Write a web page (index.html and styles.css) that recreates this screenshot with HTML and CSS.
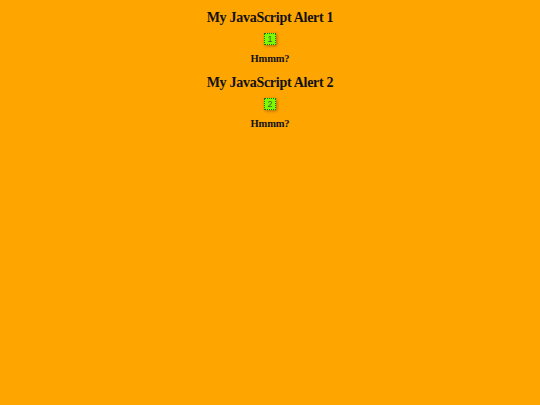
FILE: index.html
```html
<!DOCTYPE html>
<html>
<head>
<meta charset="utf-8">
<title>Alerts</title>
<link rel="stylesheet" href="styles.css">
</head>
<body>
<div class="alert">
  <h2 class="title">My JavaScript Alert 1</h2>
  <button class="btn">1</button>
  <p class="msg">Hmmm?</p>
</div>
<div class="alert">
  <h2 class="title">My JavaScript Alert 2</h2>
  <button class="btn">2</button>
  <p class="msg">Hmmm?</p>
</div>
</body>
</html>
```
FILE: styles.css
```css
html, body {
  margin: 0;
  padding: 0;
  background: #ffa500;
  height: 100%;
}
body {
  font-family: "Liberation Serif", "Times New Roman", serif;
  color: #000;
  padding-top: 10px;
  box-sizing: border-box;
}
.alert {
  display: flex;
  flex-direction: column;
  align-items: center;
  height: 65px;
}
.title {
  margin: 0;
  font-size: 14px;
  letter-spacing: -0.28px;
  font-weight: bold;
  line-height: 16px;
  color: #111;
}
.btn {
  margin-top: 7px;
  width: 12px;
  height: 12px;
  padding: 0;
  background: #7cfc00;
  border: 1px dotted #2a6a00;
  box-shadow: 1px 1px 3px rgba(0,0,0,0.35);
  font-family: "Liberation Sans", Arial, sans-serif;
  font-size: 9px;
  line-height: 10px;
  color: #4a5a3a;
  text-align: center;
}
.msg {
  margin: 8px 0 0;
  font-size: 10.5px;
  letter-spacing: -0.15px;
  font-weight: bold;
  line-height: 12px;
  color: #111;
}
```
